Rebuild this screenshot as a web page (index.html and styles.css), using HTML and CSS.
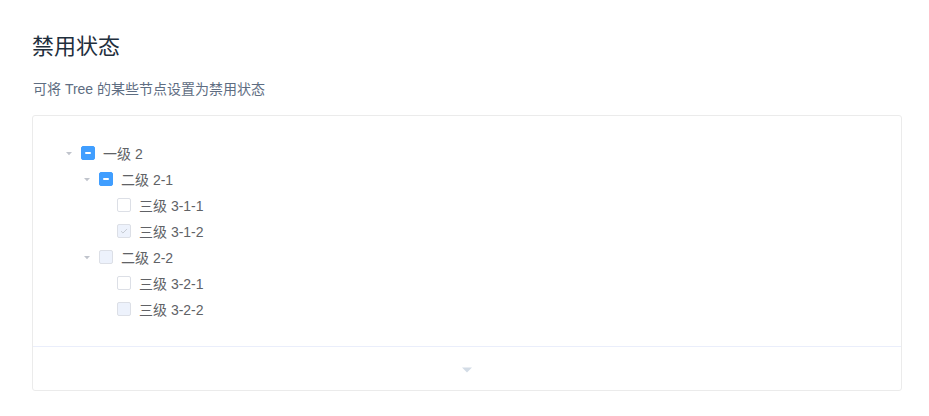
FILE: index.html
```html
<!DOCTYPE html>
<html lang="zh-CN">
<head>
<meta charset="utf-8">
<title>禁用状态</title>
<link rel="stylesheet" href="styles.css">
</head>
<body>
<div class="page">
  <h3 class="title">禁用状态</h3>
  <p class="desc">可将 Tree 的某些节点设置为禁用状态</p>
  <div class="demo">
    <div class="source">
      <div class="tree">
        <div class="node lv1">
          <span class="caret"><svg viewBox="0 0 12 12" width="12" height="12"><path d="M3 5h6L6 8.2z"/></svg></span>
          <span class="cb indeterminate"></span>
          <span class="label">一级 2</span>
        </div>
        <div class="node lv2">
          <span class="caret"><svg viewBox="0 0 12 12" width="12" height="12"><path d="M3 5h6L6 8.2z"/></svg></span>
          <span class="cb indeterminate"></span>
          <span class="label">二级 2-1</span>
        </div>
        <div class="node lv3">
          <span class="caret leaf"></span>
          <span class="cb"></span>
          <span class="label">三级 3-1-1</span>
        </div>
        <div class="node lv3">
          <span class="caret leaf"></span>
          <span class="cb disabled checked"><svg viewBox="0 0 14 14" width="12" height="12"><path d="M3.5 7.2l2.3 2.2 4.7-4.8" fill="none" stroke="#c0c4cc" stroke-width="1"/></svg></span>
          <span class="label">三级 3-1-2</span>
        </div>
        <div class="node lv2">
          <span class="caret"><svg viewBox="0 0 12 12" width="12" height="12"><path d="M3 5h6L6 8.2z"/></svg></span>
          <span class="cb disabled"></span>
          <span class="label">二级 2-2</span>
        </div>
        <div class="node lv3">
          <span class="caret leaf"></span>
          <span class="cb"></span>
          <span class="label">三级 3-2-1</span>
        </div>
        <div class="node lv3">
          <span class="caret leaf"></span>
          <span class="cb disabled"></span>
          <span class="label">三级 3-2-2</span>
        </div>
      </div>
    </div>
    <div class="control">
      <svg class="ctrl-caret" viewBox="0 0 16 16" width="16" height="16"><path d="M3 5.5h10L8 10.5z"/></svg>
    </div>
  </div>
</div>
</body>
</html>
```
FILE: styles.css
```css
html, body {
  margin: 0;
  padding: 0;
  background: #fff;
}
body {
  font-family: "Liberation Sans", "Noto Sans CJK SC", sans-serif;
  color: #1f2f3d;
}
.page {
  padding: 30px 0 0 32px;
  width: 870px;
}
.title {
  margin: 0;
  font-size: 22px;
  font-weight: 400;
  line-height: 33px;
  color: #1f2f3d;
}
.desc {
  margin: 16px 0 15px;
  font-size: 14px;
  line-height: 21px;
  color: #5e6d82;
  padding-left: 1px;
}
.demo {
  border: 1px solid #ebebeb;
  border-radius: 3px;
}
.source {
  padding: 24px;
}
.tree {
  font-size: 14px;
  color: #606266;
}
.node {
  display: flex;
  align-items: center;
  height: 26px;
}
.lv2 { padding-left: 18px; }
.lv3 { padding-left: 36px; }
.caret {
  width: 12px;
  height: 12px;
  padding: 6px;
  display: flex;
}
.caret svg {
  fill: #c0c4cc;
}
.cb {
  box-sizing: border-box;
  width: 14px;
  height: 14px;
  border: 1px solid #dcdfe6;
  border-radius: 2px;
  background: #fff;
  margin-right: 8px;
  position: relative;
  display: flex;
  align-items: center;
  justify-content: center;
}
.cb.indeterminate {
  background: #409eff;
  border-color: #409eff;
}
.cb.indeterminate::before {
  content: "";
  width: 6px;
  height: 2px;
  background: #fff;
  border-radius: 1px;
}
.cb.disabled {
  background: #edf2fc;
  border-color: #dcdfe6;
}
.label {
  line-height: 26px;
  padding-top: 1px;
}
.control {
  height: 44px;
  border-top: 1px solid #eaeefb;
  display: flex;
  align-items: center;
  justify-content: center;
  box-sizing: border-box;
}
.ctrl-caret {
  fill: #d3dce6;
  margin-top: 2px;
}
```
